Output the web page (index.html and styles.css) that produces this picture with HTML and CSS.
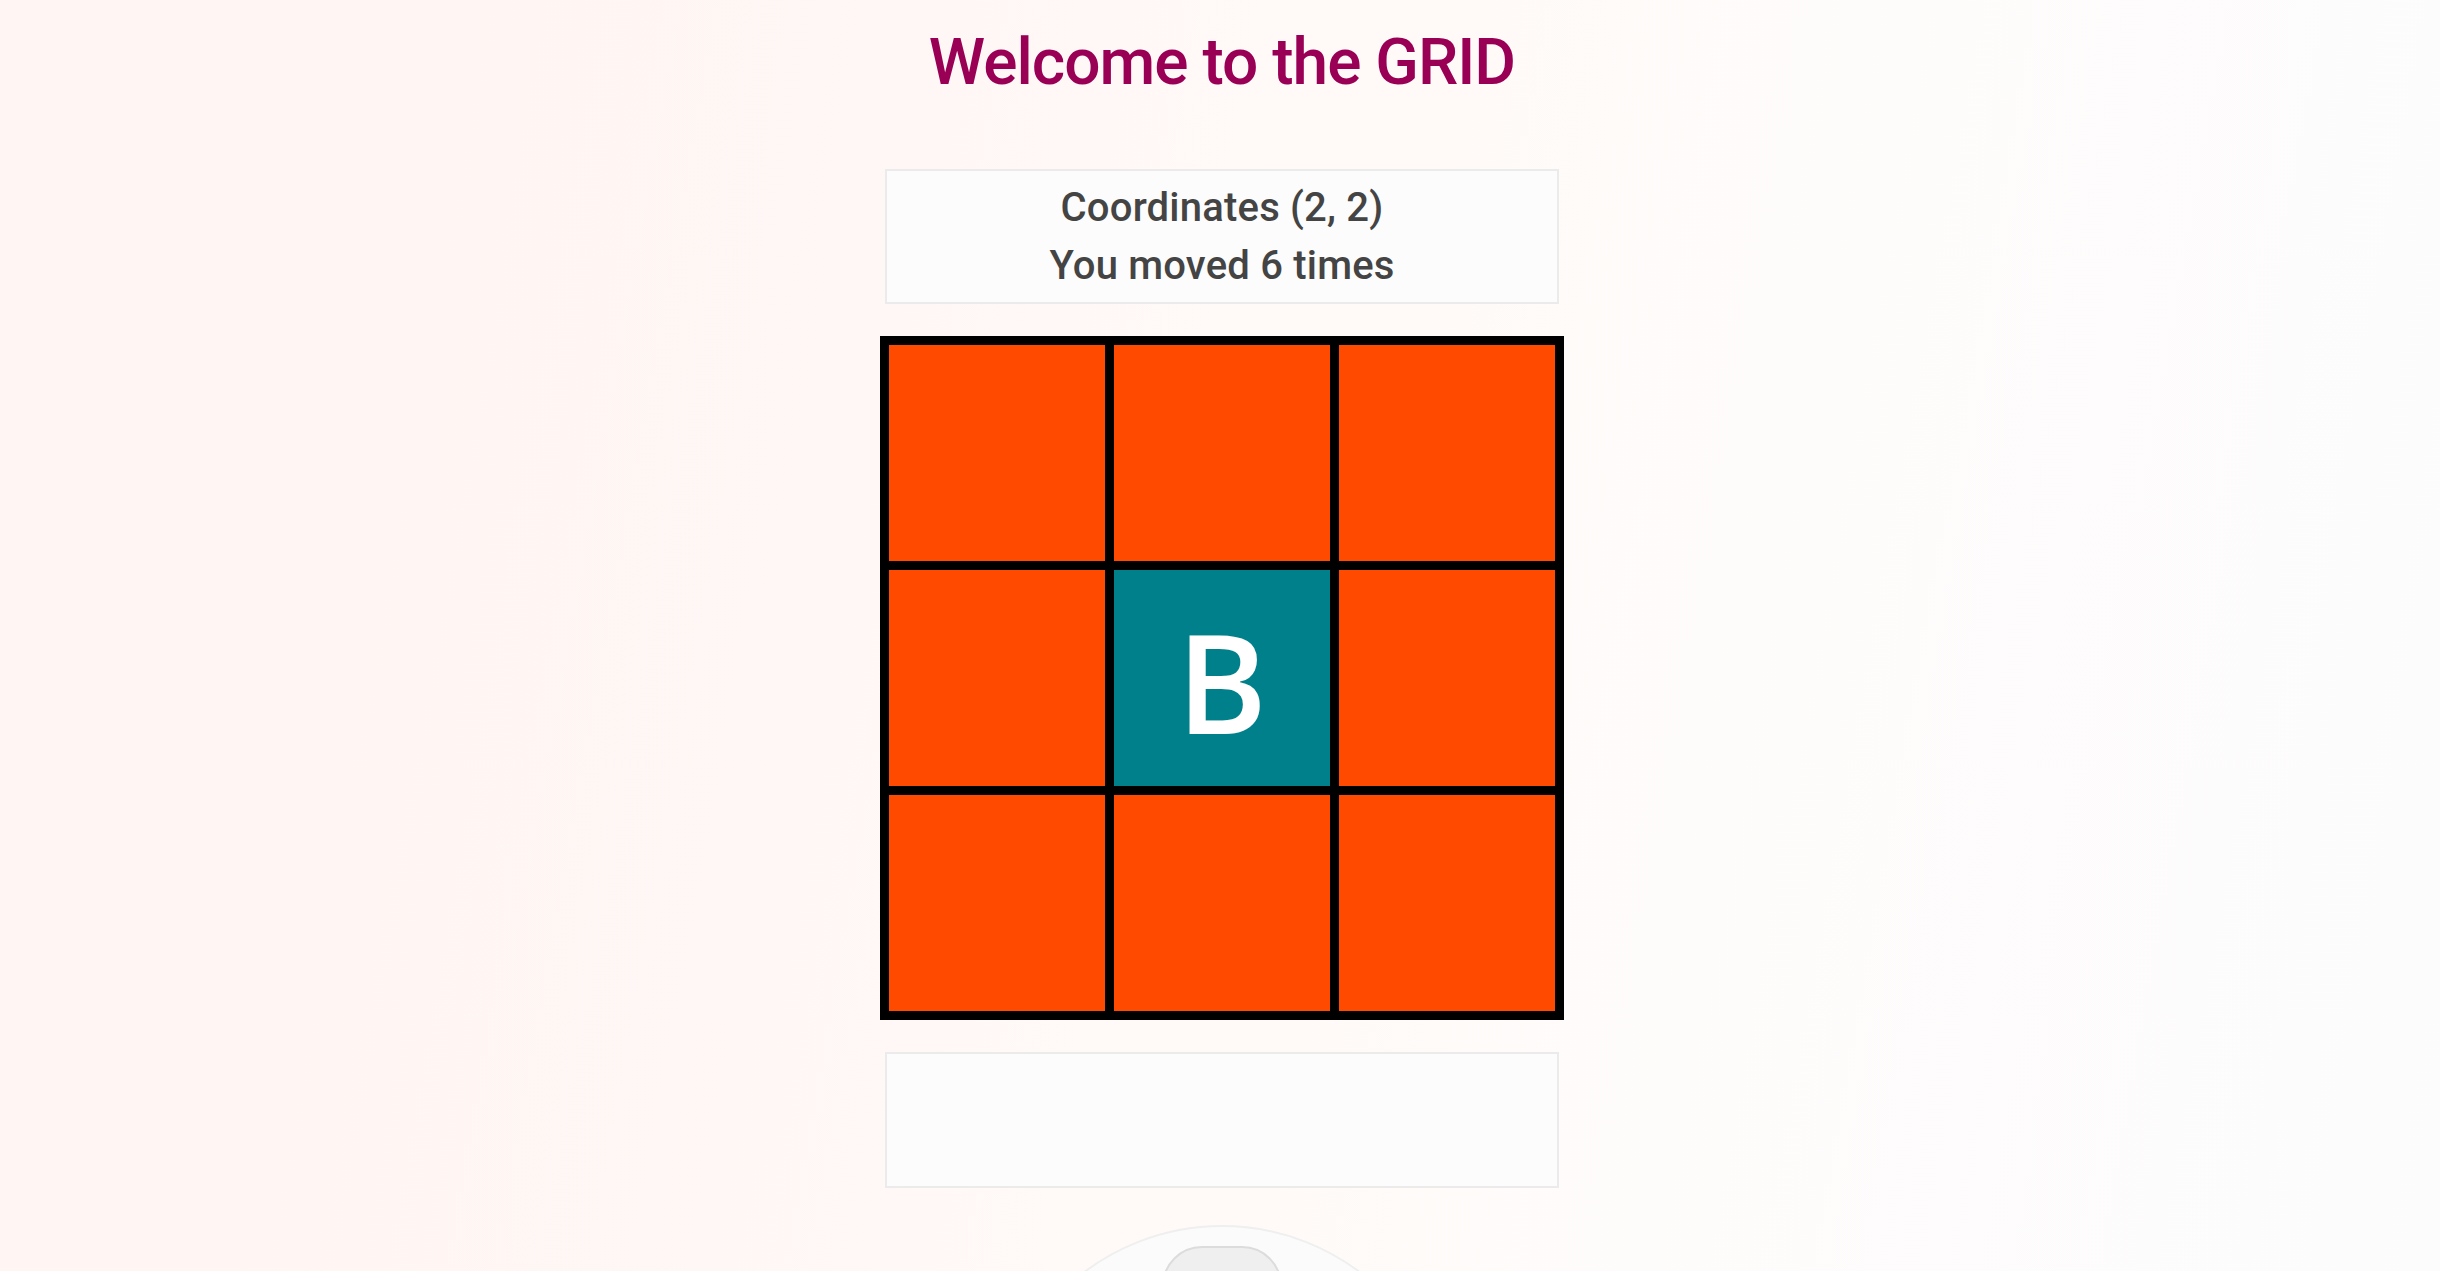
FILE: index.html
```html
<!DOCTYPE html>
<html lang="en">
<head>
<meta charset="utf-8">
<title>Welcome to the GRID</title>
<link rel="stylesheet" href="styles.css">
</head>
<body>
<main class="app">
  <h1 class="title">Welcome to the GRID</h1>
  <section class="info">
    <div class="info-line">Coordinates (2, 2)</div>
    <div class="info-line">You moved 6 times</div>
  </section>
  <div class="grid">
    <div class="cell"></div>
    <div class="cell"></div>
    <div class="cell"></div>
    <div class="cell"></div>
    <div class="cell cell-active">B</div>
    <div class="cell"></div>
    <div class="cell"></div>
    <div class="cell"></div>
    <div class="cell"></div>
  </div>
  <section class="message"></section>
  <div class="pad">
    <button class="pad-btn pad-up" aria-label="up"></button>
  </div>
</main>
</body>
</html>
```

FILE: styles.css
```css
html, body {
  margin: 0;
  padding: 0;
}
body {
  height: 100vh;
  overflow: hidden;
  font-family: Roboto, "Liberation Sans", sans-serif;
  background: linear-gradient(100deg, #fff5f2 0%, #fff7f5 35%, #fffaf8 55%, #fefcfb 70%, #fdfcfd 100%);
}
.app {
  display: flex;
  flex-direction: column;
  align-items: center;
  padding-left: 4px;
}
.title {
  margin: 0;
  padding-top: 23px;
  font-size: 64px;
  line-height: 80px;
  font-weight: 500;
  letter-spacing: -1px;
  color: #990055;
}
.info {
  box-sizing: border-box;
  width: 674px;
  margin-top: 66px;
  padding: 8px 0 7px;
  border: 2px solid #ebebeb;
  background: #fcfcfc;
  text-align: center;
  color: #444;
  font-size: 40px;
  line-height: 58px;
  font-weight: 500;
  letter-spacing: 0.2px;
}
.grid {
  margin-top: 32px;
  display: grid;
  grid-template-columns: repeat(3, 216px);
  grid-auto-rows: 216px;
  gap: 9px;
  padding: 9px;
  background: #000;
}
.cell {
  background: #ff4a00;
  display: flex;
  align-items: center;
  justify-content: center;
}
.cell-active {
  background: #00808a;
  color: #fff;
  font-family: "Open Sans", "Liberation Sans", sans-serif;
  font-weight: 600;
  font-size: 137px;
  line-height: 1;
  padding-top: 6px;
  box-sizing: border-box;
}
.message {
  box-sizing: border-box;
  width: 674px;
  height: 136px;
  margin-top: 32px;
  border: 2px solid #ebebeb;
  background: #fcfcfc;
}
.pad {
  box-sizing: border-box;
  margin-top: 37px;
  width: 460px;
  height: 460px;
  border-radius: 50%;
  border: 2px solid #efefef;
  background: #fbfbfb;
  display: flex;
  flex-direction: column;
  align-items: center;
  padding-top: 19px;
  flex-shrink: 0;
}
.pad-btn {
  box-sizing: border-box;
  width: 120px;
  height: 110px;
  border: 2px solid #dcdcdc;
  background: #efefef;
  padding: 0;
}
.pad-up {
  border-radius: 40px 40px 0 0;
}
```
